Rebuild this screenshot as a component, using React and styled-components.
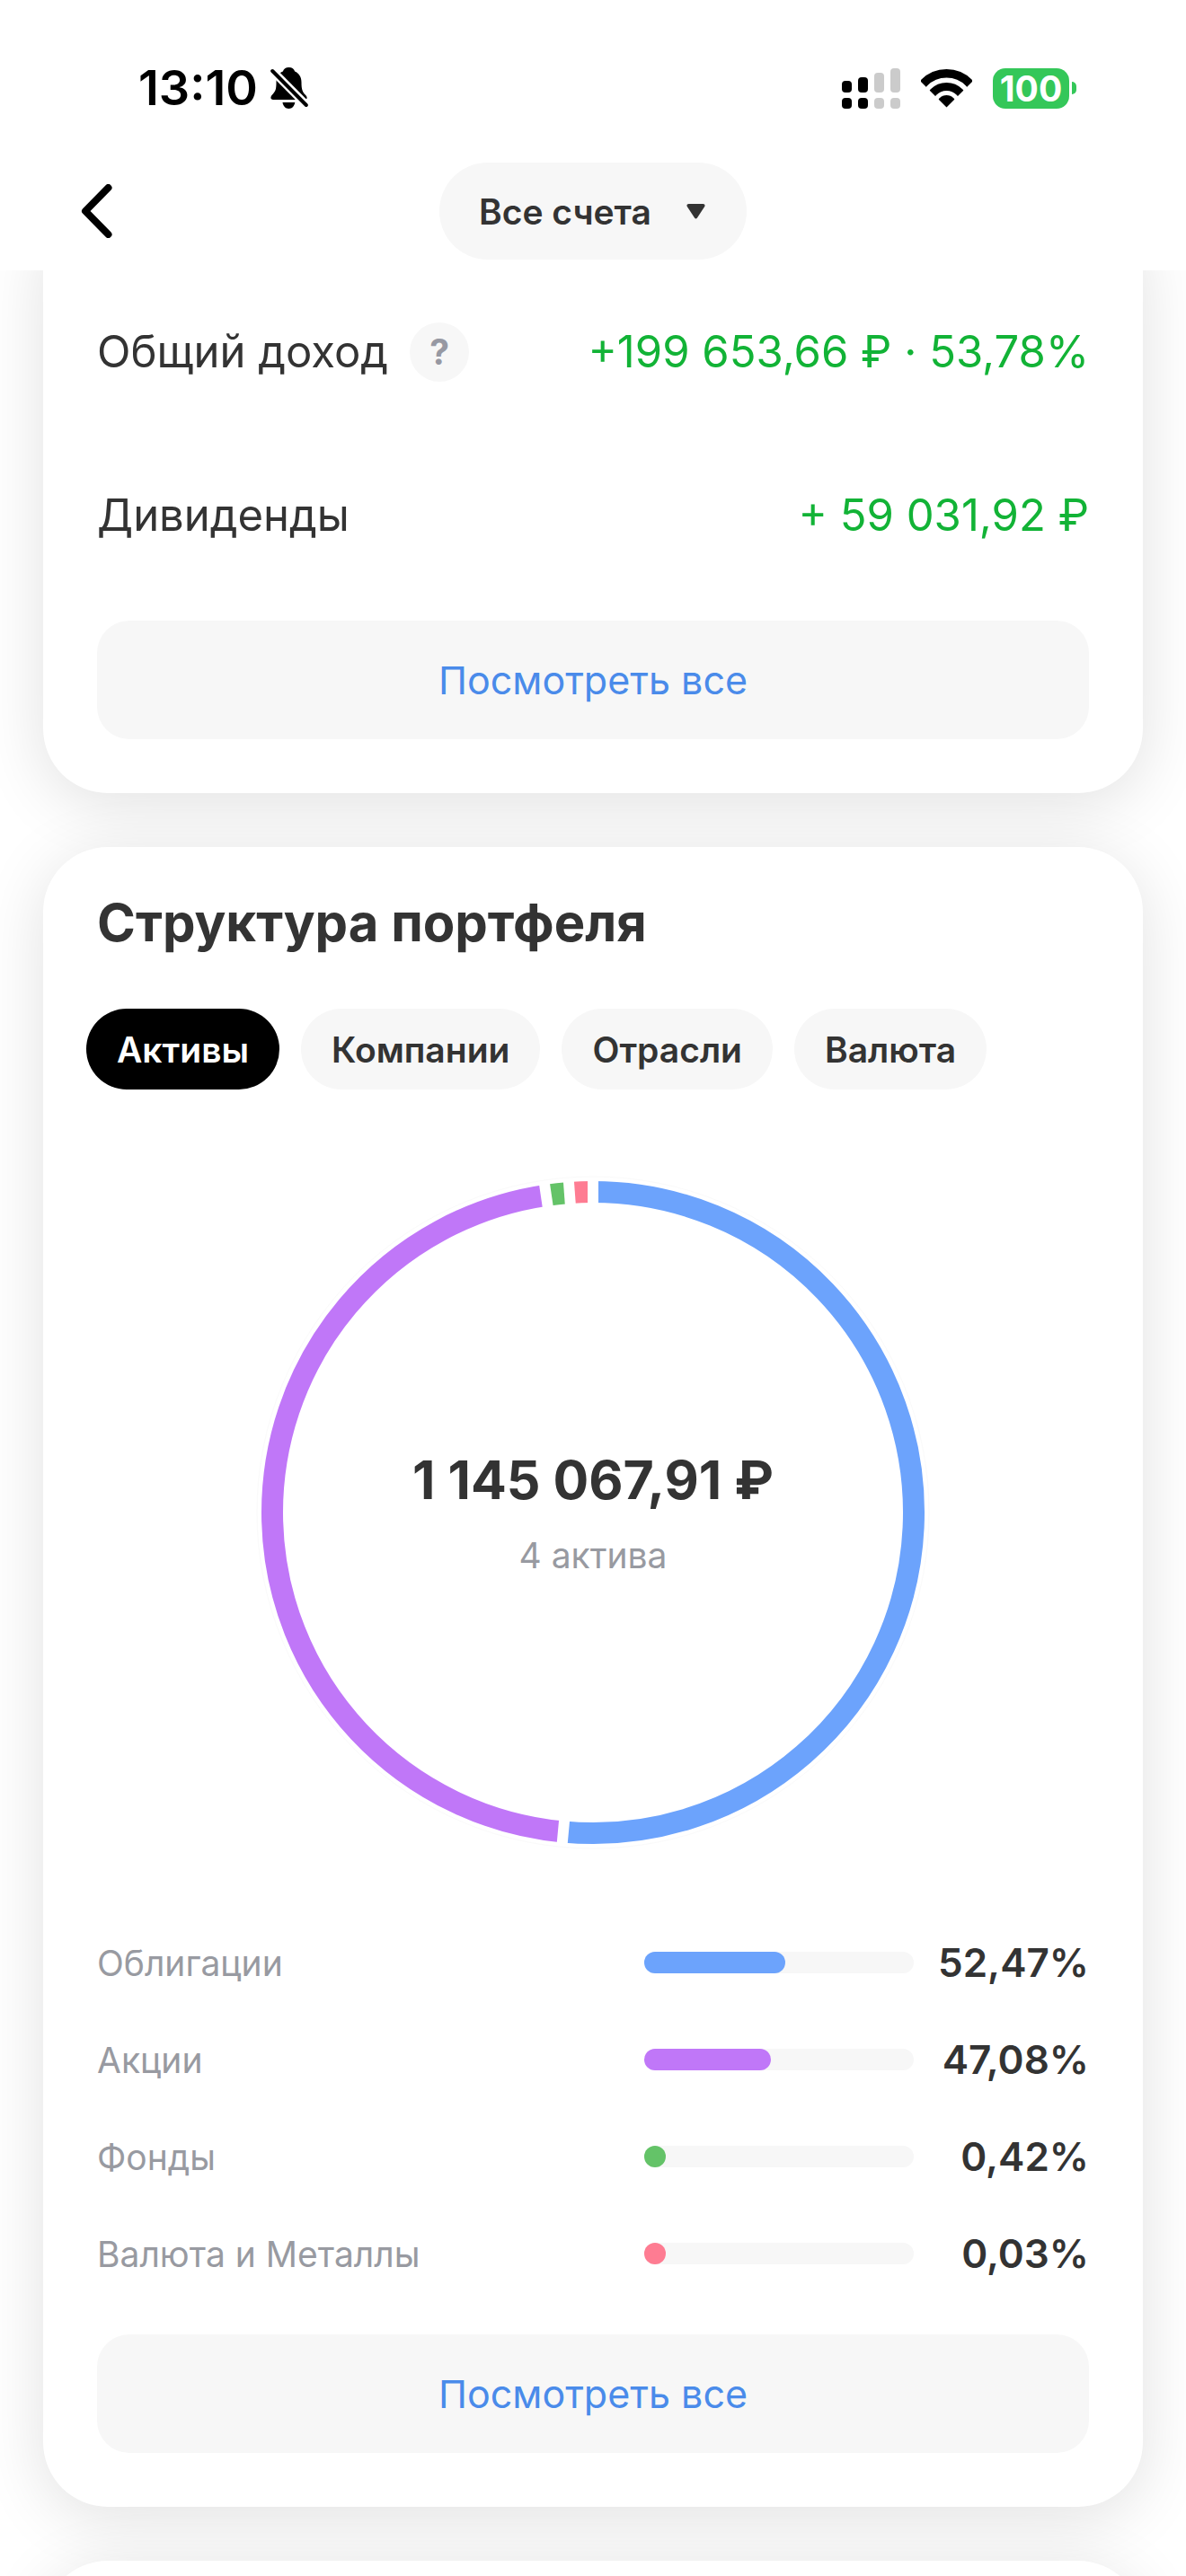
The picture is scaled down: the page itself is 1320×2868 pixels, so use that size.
import React, { useState } from 'react';
import styled, { createGlobalStyle, css } from 'styled-components';

const GlobalStyle = createGlobalStyle`
	* { box-sizing: border-box; }
	body {
		margin: 0;
		background-color: #fff;
		color: #333;
		font-family: Inter, "Liberation Sans", sans-serif;
	}
	button, select {
		font-family: inherit;
		border: none;
		cursor: pointer;
	}
`;

const Screen = styled.div`
	display: flex;
	flex-direction: column;
	height: 100vh;
	overflow: hidden;
`;

const Header = styled.header`
	flex: none;
	padding-bottom: 12px;
	background-color: #fff;
`;

const StatusBar = styled.div`
	display: flex;
	align-items: center;
	justify-content: space-between;
	padding: 68px 122px 53px 154px;
	color: black;
`;

const StatusGroup = styled.div`
	display: flex;
	align-items: center;
	gap: ${props => props.gap}px;
	height: 60px;
`;

const Clock = styled.span`
	font-size: 54px;
	font-weight: 600;
	line-height: 60px;
`;

const Battery = styled.span`
	display: flex;
	align-items: center;
	gap: 3px;
`;

const BatteryLevel = styled.span`
	width: 85px;
	height: 45px;
	border-radius: 14px;
	background-color: #34c759;
	color: white;
	font-size: 39px;
	font-weight: 700;
	line-height: 45px;
	text-align: center;
`;

const BatteryTip = styled.span`
	width: 5px;
	height: 14px;
	border-radius: 0 7px 7px 0;
	background-color: #34c759;
`;

const NavBar = styled.nav`
	display: grid;
	grid-template-columns: 1fr auto 1fr;
	align-items: center;
	padding: 0 72px;
`;

const BackButton = styled.button`
	justify-self: start;
	display: flex;
	padding: 18px;
	background: none;
`;

const AccountPicker = styled.label`
	position: relative;
	display: flex;
	align-items: center;
`;

const AccountSelect = styled.select`
	appearance: none;
	height: 108px;
	padding: 0 106px 0 44px;
	border-radius: 54px;
	background-color: #f7f7f7;
	color: #333;
	font-size: 39px;
	font-weight: 600;
`;

const PickerArrow = styled.svg`
	position: absolute;
	right: 46px;
	pointer-events: none;
`;

const Feed = styled.main`
	flex: 1;
	min-height: 0;
	display: flex;
	flex-direction: column;
	gap: 60px;
	padding: 0 48px;
	overflow-y: auto;
	scrollbar-width: none;
`;

const Card = styled.section`
	flex: none;
	padding: 48px 60px 60px;
	border-radius: 72px;
	background-color: #fff;
	box-shadow: 0 12px 72px rgba(0, 0, 0, 0.12);

	${props => {
		if (props.$scrolled) return css`
			margin-top: -72px;
			padding-top: 72px;
		`;
	}};
`;

const IncomeRow = styled.div`
	display: flex;
	align-items: center;
	justify-content: space-between;
	height: 182px;
	font-size: 49px;
	line-height: 60px;
`;

const IncomeLabel = styled.div`
	display: flex;
	align-items: center;
	gap: 24px;
`;

const IncomeValue = styled.span`
	color: #12b336;
	white-space: nowrap;
`;

const HelpButton = styled.button`
	width: 66px;
	height: 66px;
	padding: 0;
	border-radius: 50%;
	background-color: #f7f7f7;
	color: #9799a3;
	font-size: 39px;
	font-weight: 700;
	line-height: 66px;
`;

const ShowAll = styled.button`
	display: block;
	width: 100%;
	height: 132px;
	margin-top: ${props => props.$top}px;
	border-radius: 36px;
	background-color: #f7f7f7;
	color: #4a8bea;
	font-size: 43px;
	line-height: 60px;
`;

const Title = styled.h2`
	margin: 0 0 60px;
	font-size: 58px;
	font-weight: 700;
	line-height: 72px;
`;

const Tabs = styled.div`
	display: flex;
	gap: 24px;
	margin: 0 -12px 96px;
`;

const Tab = styled.button`
	height: 90px;
	padding: 0 34px;
	border-radius: 45px;
	background-color: ${props => props.$active ? '#000' : '#f7f7f7'};
	color: ${props => props.$active ? '#fff' : '#333'};
	font-size: 39px;
	font-weight: 600;
	white-space: nowrap;
`;

const ChartArea = styled.div`
	display: grid;
	place-items: center;
	margin-bottom: 72px;

	> * {
		grid-area: 1 / 1;
	}
`;

const ChartTotal = styled.div`
	text-align: center;
`;

const Total = styled.div`
	margin-bottom: 24px;
	font-size: 59px;
	font-weight: 700;
	line-height: 72px;
`;

const TotalNote = styled.div`
	color: #989aa1;
	font-size: 39px;
	line-height: 48px;
`;

const Legend = styled.ul`
	margin: 0;
	padding: 0;
	list-style: none;
`;

const LegendRow = styled.li`
	display: grid;
	grid-template-columns: 1fr 300px 195px;
	align-items: center;
	height: 108px;
`;

const LegendLabel = styled.span`
	color: #989aa1;
	font-size: 39px;
`;

const Track = styled.div`
	height: 24px;
	border-radius: 12px;
	background-color: #f7f7f7;
`;

const Fill = styled.div`
	min-width: 24px;
	height: 24px;
	border-radius: 12px;
	background-color: ${props => props.color};
`;

const LegendValue = styled.span`
	font-size: 44px;
	font-weight: 600;
	text-align: right;
`;

const NextCard = styled(Card)`
	height: 600px;
`;

const assets = [
	{ name: 'Облигации', share: 52.47, color: '#6ca3fc' },
	{ name: 'Акции', share: 47.08, color: '#c077f8' },
	{ name: 'Фонды', share: 0.42, color: '#64c368' },
	{ name: 'Валюта и Металлы', share: 0.03, color: '#fe7c92' },
];

const tabs = ['Активы', 'Компании', 'Отрасли', 'Валюта'];

const formatShare = (value) => value.toFixed(2).replace('.', ',') + '%';

// tiny shares still get a visible sector
const MIN_ANGLE = 4.2;

const getSectors = (items) => {
	const small = items.filter(item => item.share * 3.6 < MIN_ANGLE);
	const bigTotal = items
		.filter(item => item.share * 3.6 >= MIN_ANGLE)
		.reduce((sum, item) => sum + item.share, 0);
	const rest = 360 - small.length * MIN_ANGLE;
	let start = 0;

	return items.map(item => {
		const angle = item.share * 3.6 < MIN_ANGLE ? MIN_ANGLE : rest * item.share / bigTotal;
		const sector = { ...item, start, end: start + angle };
		start += angle;
		return sector;
	});
};

const point = (radius, angle) => {
	const rad = (angle - 90) * Math.PI / 180;
	return `${375 + radius * Math.cos(rad)} ${375 + radius * Math.sin(rad)}`;
};

const Donut = ({ items }) => {
	const sectors = getSectors(items);

	return (
		<svg width="750" height="750" viewBox="0 0 750 750" aria-hidden="true">
			<circle cx="375" cy="375" r="374" fill="none" stroke="#fafafa" />
			{sectors.map(s => (
				<path
					key={s.name}
					d={`M${point(357, s.start)} A357 357 0 ${s.end - s.start > 180 ? 1 : 0} 1 ${point(357, s.end)}`}
					fill="none"
					stroke={s.color}
					strokeWidth="24"
				/>
			))}
			{sectors.map(s => (
				<path key={s.name} d={`M${point(340, s.start)} L${point(372, s.start)}`} stroke="#fff" strokeWidth="12" />
			))}
		</svg>
	);
};

const BellOff = () => (
	<svg width="42" height="46" viewBox="0 0 42 46" aria-hidden="true">
		<path d="M20.5 0c3.6 0 6 2 6.600 4.600c4.800 2 7.400 6.600 7.400 11.900c0 8 1.200 11 4.800 14.500c2.200 2.200 1.600 5-1.300 5H3c-3 0-3.500-3-1-5.500c4-4 4.500-7 4.500-14c0-6 2.700-10.300 7.400-11.900C14.500 2 17 0 20.500 0z" />
		<path d="M13.500 39H27.300c-.6 4.200-3.300 7-6.900 7s-6.300-2.800-6.900-7z" />
		<path d="M-1 .5L43 45" stroke="#fff" strokeWidth="9" />
		<path d="M2.200 4L39.800 42" stroke="#000" strokeWidth="4" strokeLinecap="round" />
	</svg>
);

const Signal = () => (
	<svg width="65" height="45" viewBox="0 0 65 45" aria-hidden="true">
		{[14, 10, 5, 0].map((y, i) => (
			<g key={y} fill={i < 2 ? '#000' : '#cbcbcb'}>
				<rect x={i * 18} y={y} width="11" height={27 - y} rx="4" />
				<rect x={i * 18} y="33" width="11" height="12" rx="4" />
			</g>
		))}
	</svg>
);

const Wifi = () => (
	<svg width="57" height="43" viewBox="0 0 57 43" aria-hidden="true">
		<clipPath id="wave">
			<path d="M28.500 42.500L-3 11V-2H60V11z" />
		</clipPath>
		<g clipPath="url(#wave)" fill="none" stroke="#000">
			<circle cx="28.500" cy="40" r="35.200" strokeWidth="9.500" />
			<circle cx="28.500" cy="40" r="20.500" strokeWidth="9" />
			<circle cx="28.500" cy="40" r="11" fill="#000" stroke="none" />
		</g>
	</svg>
);

const App = () => {
	const [active, setActive] = useState(tabs[0]);

	return (
		<>
			<GlobalStyle />
			<Screen>
				<Header>
					<StatusBar>
						<StatusGroup gap={14}>
							<Clock>13:10</Clock>
							<BellOff />
						</StatusGroup>
						<StatusGroup gap={23}>
							<Signal />
							<Wifi />
							<Battery>
								<BatteryLevel>100</BatteryLevel>
								<BatteryTip />
							</Battery>
						</StatusGroup>
					</StatusBar>
					<NavBar>
						<BackButton aria-label="Назад">
							<svg width="36" height="60" viewBox="0 0 36 60" fill="none" stroke="#000" strokeWidth="8" strokeLinecap="round" strokeLinejoin="round">
								<path d="M30.500 4L5 30L30.500 56" />
							</svg>
						</BackButton>
						<AccountPicker>
							<AccountSelect aria-label="Счет">
								<option>Все счета</option>
							</AccountSelect>
							<PickerArrow width="21" height="17" viewBox="0 0 21 17">
								<path d="M2.500 0H18.500Q21.500 .5 20.200 3L12 15.500Q10.500 17.500 9 15.500L.8 3Q-.5 .5 2.500 0z" fill="#333" />
							</PickerArrow>
						</AccountPicker>
					</NavBar>
				</Header>

				<Feed>
					<Card $scrolled>
						<IncomeRow>
							<IncomeLabel>
								Общий доход
								<HelpButton>?</HelpButton>
							</IncomeLabel>
							<IncomeValue>+199 653,66 ₽ · 53,78%</IncomeValue>
						</IncomeRow>
						<IncomeRow>
							<IncomeLabel>Дивиденды</IncomeLabel>
							<IncomeValue>+ 59 031,92 ₽</IncomeValue>
						</IncomeRow>
						<ShowAll $top={26}>Посмотреть все</ShowAll>
					</Card>

					<Card>
						<Title>Структура портфеля</Title>
						<Tabs role="tablist">
							{tabs.map(tab => (
								<Tab key={tab} role="tab" aria-selected={tab === active} $active={tab === active} onClick={() => setActive(tab)}>
									{tab}
								</Tab>
							))}
						</Tabs>
						<ChartArea>
							<Donut items={assets} />
							<ChartTotal>
								<Total>1 145 067,91 ₽</Total>
								<TotalNote>4 актива</TotalNote>
							</ChartTotal>
						</ChartArea>
						<Legend>
							{assets.map(item => (
								<LegendRow key={item.name}>
									<LegendLabel>{item.name}</LegendLabel>
									<Track>
										<Fill color={item.color} style={{ width: `${item.share}%` }} />
									</Track>
									<LegendValue>{formatShare(item.share)}</LegendValue>
								</LegendRow>
							))}
						</Legend>
						<ShowAll $top={36}>Посмотреть все</ShowAll>
					</Card>

					<NextCard />
				</Feed>
			</Screen>
		</>
	);
};

export default App;
